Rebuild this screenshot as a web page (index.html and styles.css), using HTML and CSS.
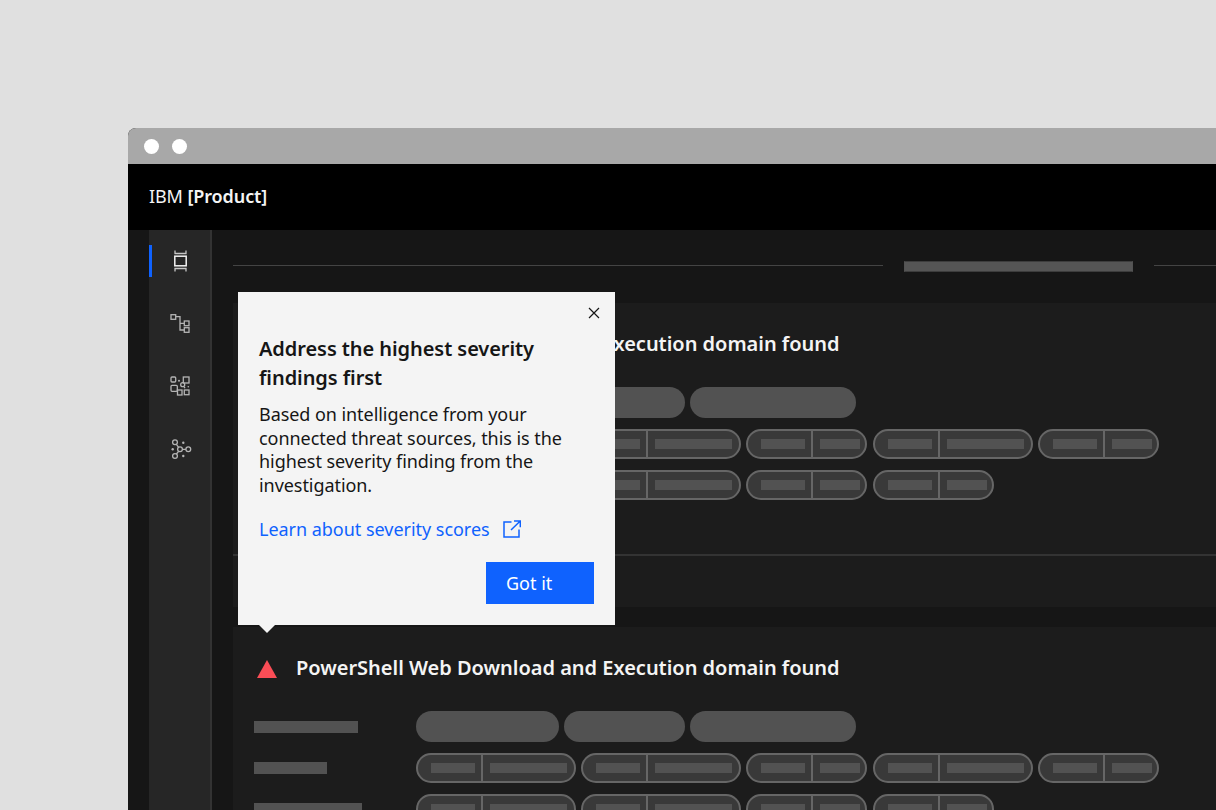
FILE: index.html
```html
<!DOCTYPE html>
<html>
  <head>
    <title>IBM Product</title>
    <link rel="stylesheet" href="styles.css">
  </head>
  <body>
    <div class="window">
      <div class="titlebar">
        <span class="dot"></span>
        <span class="dot"></span>
      </div>
      <header class="topbar">IBM <b>[Product]</b></header>
      <div class="content">
        <nav class="rail">
          <div class="rail-item active">
            <svg viewBox="0 0 32 32" width="32" height="32" fill="none">
              <rect x="10.8" y="11.2" width="11.4" height="9.600" stroke="#f4f4f4" stroke-width="1.5"/>
              <path d="M11 5.500V8.500H22V5.500M11 26.500V23.500H22V26.500" stroke="#c6c6c6" stroke-width="1.3"/>
            </svg>
          </div>
          <div class="rail-item">
            <svg viewBox="0 0 32 32" width="32" height="32" fill="none" stroke="#b4b4b4" stroke-width="1.3">
              <rect x="7" y="6.7" width="4.7" height="4.6"/>
              <rect x="20.3" y="13" width="4.7" height="4.7"/>
              <rect x="20.3" y="19.7" width="4.7" height="4.6"/>
              <path d="M11.7 8.7H16V22H20.3M16 15.3H20.3"/>
            </svg>
          </div>
          <div class="rail-item">
            <svg viewBox="0 0 32 32" width="32" height="32" fill="none" stroke="#b4b4b4" stroke-width="1.3">
              <rect x="7" y="7" width="4.7" height="5" rx="1"/>
              <rect x="19.3" y="7" width="5.7" height="6"/>
              <rect x="7" y="15.3" width="6.3" height="6" rx="1"/>
              <rect x="13.5" y="20" width="4.5" height="5"/>
              <rect x="20.3" y="20" width="4.7" height="4.7"/>
              <circle cx="18.7" cy="14.7" r="2"/>
              <g fill="#b4b4b4" stroke="none">
                <circle cx="15" cy="10.7" r="1"/>
                <circle cx="24.3" cy="16.7" r=".8"/>
                <circle cx="20.6" cy="17.6" r=".8"/>
              </g>
            </svg>
          </div>
          <div class="rail-item">
            <svg viewBox="0 0 32 32" width="32" height="32" fill="none" stroke="#b4b4b4" stroke-width="1.3">
              <circle cx="16" cy="16.3" r="2.4"/>
              <circle cx="24.3" cy="16.3" r="2.4"/>
              <circle cx="11" cy="9.3" r="2.4"/>
              <circle cx="11" cy="23" r="2.4"/>
              <path d="M18.4 16.3H21.9M14.6 14.3L12.4 11.3M14.6 18.3L12.4 21"/>
              <g fill="#b4b4b4" stroke="none">
                <circle cx="19.3" cy="9.7" r="1.2"/>
                <circle cx="19.3" cy="23" r="1.2"/>
                <circle cx="8.7" cy="16.3" r="1.2"/>
              </g>
            </svg>
          </div>
        </nav>

        <main class="main">
          <div class="section-head">
            <span class="rule first"></span>
            <span class="section-bar"></span>
            <span class="rule"></span>
          </div>

          <section class="card">
            <div class="card-body">
              <h2 class="finding-title">
                <svg class="sev-icon" viewBox="0 0 20 18" width="20" height="18"><path d="M10 0L20 18H0Z" fill="#fa4d56"/></svg>
                PowerShell Web Download and Execution domain found
              </h2>
              <div class="finding-rows">
                <div class="finding-row">
                  <span class="label l1"></span>
                  <span class="pill p1"></span><span class="pill p2"></span><span class="pill p3"></span>
                </div>
                <div class="finding-row tags">
                  <span class="label l2"></span>
                  <span class="tag"><i><s></s></i><i><s></s></i></span>
                  <span class="tag"><i><s></s></i><i><s></s></i></span>
                  <span class="tag short"><i><s></s></i><i><s></s></i></span>
                  <span class="tag"><i><s></s></i><i><s></s></i></span>
                  <span class="tag short"><i><s></s></i><i><s></s></i></span>
                </div>
                <div class="finding-row tags">
                  <span class="label l3"></span>
                  <span class="tag"><i><s></s></i><i><s></s></i></span>
                  <span class="tag"><i><s></s></i><i><s></s></i></span>
                  <span class="tag short"><i><s></s></i><i><s></s></i></span>
                  <span class="tag short"><i><s></s></i><i><s></s></i></span>
                </div>
              </div>
            </div>
            <div class="card-foot"></div>
          </section>

          <section class="card">
            <div class="card-body">
              <h2 class="finding-title">
                <svg class="sev-icon" viewBox="0 0 20 18" width="20" height="18"><path d="M10 0L20 18H0Z" fill="#fa4d56"/></svg>
                PowerShell Web Download and Execution domain found
              </h2>
              <div class="finding-rows">
                <div class="finding-row">
                  <span class="label l1"></span>
                  <span class="pill p1"></span><span class="pill p2"></span><span class="pill p3"></span>
                </div>
                <div class="finding-row tags">
                  <span class="label l2"></span>
                  <span class="tag"><i><s></s></i><i><s></s></i></span>
                  <span class="tag"><i><s></s></i><i><s></s></i></span>
                  <span class="tag short"><i><s></s></i><i><s></s></i></span>
                  <span class="tag"><i><s></s></i><i><s></s></i></span>
                  <span class="tag short"><i><s></s></i><i><s></s></i></span>
                </div>
                <div class="finding-row tags">
                  <span class="label l3"></span>
                  <span class="tag"><i><s></s></i><i><s></s></i></span>
                  <span class="tag"><i><s></s></i><i><s></s></i></span>
                  <span class="tag short"><i><s></s></i><i><s></s></i></span>
                  <span class="tag short"><i><s></s></i><i><s></s></i></span>
                </div>
              </div>
            </div>
            <div class="card-foot"></div>
          </section>

          <div class="popover">
            <button type="button" class="close">
              <svg viewBox="0 0 12 12" width="12" height="12"><path d="M1 1L11 11M11 1L1 11" stroke="#161616" stroke-width="1.2" fill="none"/></svg>
            </button>
            <h3 class="pop-title">Address the highest severity findings first</h3>
            <p class="pop-text">Based on intelligence from your connected threat sources, this is the highest severity finding from the investigation.</p>
            <a class="pop-link" href="#">Learn about severity scores
              <svg viewBox="0 0 18 18" width="18" height="18" fill="none" stroke="#0f62fe" stroke-width="1.5"><path d="M8.500 2H1V17H16V9.500M8 10L17.500 .8M11 1H17.300V7.300"/></svg>
            </a>
            <div class="pop-actions">
              <button type="button" class="btn-primary">Got it</button>
            </div>
          </div>
        </main>
      </div>
    </div>
  </body>
</html>
```

FILE: styles.css
```css
html, body { height: 100%; }
body { margin: 0; padding: 128px 0 0 128px; box-sizing: border-box; height: 810px; overflow: hidden; background: #e0e0e0; font-family: "Noto Sans", Roboto, sans-serif; }

.window { display: flex; flex-direction: column; height: 682px; border-radius: 8px 0 0 0; overflow: hidden; background: #161616; }

.titlebar { display: flex; align-items: center; gap: 13px; flex: none; height: 36px; padding-left: 16px; background: #a8a8a8; }
.dot { width: 15px; height: 15px; border-radius: 50%; background: #fff; }

.topbar { flex: none; height: 66px; padding-left: 21px; line-height: 65px; background: #000; color: #f4f4f4; font-size: 18px; letter-spacing: -.1px; }
.topbar b { font-weight: 600; }

.content { display: flex; flex: 1; min-height: 0; padding-left: 21px; }

.rail { display: flex; flex-direction: column; gap: 30.7px; flex: none; width: 61px; padding-top: 15px; background: #262626; border-right: 2px solid #333; }
.rail-item { display: flex; justify-content: center; height: 32px; }
.rail-item.active { box-shadow: inset 3px 0 0 #0f62fe; }

.main { position: relative; flex: 1; min-width: 0; padding: 31px 0 0 21px; }

.section-head { display: flex; align-items: center; gap: 21px; height: 11px; margin-bottom: 31px; }
.rule { flex: 1; height: 1px; margin-top: -2px; background: #444; }
.rule.first { flex: none; width: 650px; }
.section-bar { flex: none; box-sizing: border-box; width: 229px; height: 11px; border: 1px solid #3d3d3d; border-left-color: #525252; border-right-color: #525252; background: #555; }

.card { margin-bottom: 20px; background: #1c1c1c; }
.card-body { box-sizing: border-box; height: 251px; padding: 26px 0 0 21px; }
.card-foot { height: 51px; border-top: 2px solid #333; }

.finding-title { display: flex; align-items: center; gap: 19px; height: 28px; margin: 0 0 30px 3px; color: #f4f4f4; font-size: 20px; font-weight: 600; letter-spacing: -.02px; }
.sev-icon { margin-top: 3px; }

.finding-rows { display: flex; flex-direction: column; gap: 11px; }
.finding-row { display: flex; align-items: center; gap: 5px; height: 31px; }
.finding-row.tags { height: 30px; gap: 5.2px; }

.label { flex: none; height: 12px; background: #525252; }
.l1 { width: 104px; margin-right: 53px; }
.l2 { width: 73px; margin-right: 83.8px; }
.l3 { width: 108px; margin-right: 48.8px; }

.pill { height: 31px; border-radius: 16px; background: #525252; }
.p1 { width: 143px; }
.p2 { width: 121px; }
.p3 { width: 166px; }

.tag { display: flex; box-sizing: border-box; width: 160px; height: 30px; border: 2px solid #666; border-radius: 15px; background: #393939; }
.tag i { display: flex; align-items: center; box-sizing: border-box; width: 65px; padding-left: 13px; border-right: 2px solid #666; }
.tag i + i { flex: 1; padding-left: 7px; border-right: 0; }
.tag s { display: block; width: 44px; height: 10px; background: #525252; }
.tag i + i s { width: 77px; }
.tag.short { width: 121px; }
.tag.short i + i s { width: 40px; }

.popover { position: absolute; top: 62px; left: 26px; box-sizing: border-box; width: 377px; height: 333px; padding: 42px 21px 21px; background: #f4f4f4; color: #161616; }
.popover::after { content: ""; position: absolute; left: 21px; bottom: -8px; border-style: solid; border-width: 8px 8px 0; border-color: #f4f4f4 transparent transparent; }

.close { position: absolute; top: 15px; right: 15px; display: flex; padding: 0; border: 0; background: none; }

.pop-title { margin: 0 0 11px; font-size: 20px; font-weight: 600; line-height: 29px; letter-spacing: -.07px; }
.pop-text { margin: 0 0 20px; font-size: 18px; line-height: 23.6px; letter-spacing: -.06px; }

.pop-link { display: flex; align-items: center; gap: 13px; height: 24px; margin-bottom: 21px; color: #0f62fe; font-size: 18px; letter-spacing: -.03px; text-decoration: none; }

.pop-actions { display: flex; justify-content: flex-end; }
.btn-primary { width: 108px; height: 42px; padding: 0 0 0 20px; border: 0; background: #0f62fe; color: #fff; font-family: inherit; font-size: 18px; text-align: left; }
```
